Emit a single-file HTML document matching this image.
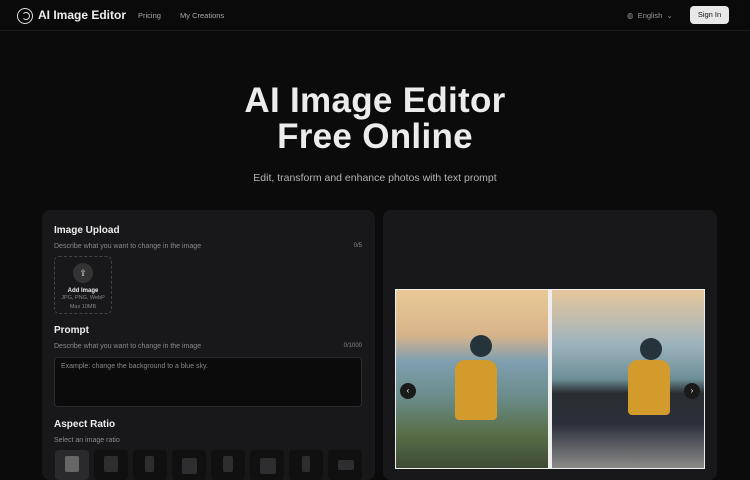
<!DOCTYPE html>
<html><head><meta charset="utf-8"><style>
*{box-sizing:border-box;margin:0;padding:0}
body{width:750px;height:468px;overflow:hidden;background:#0b0b0c;font-family:"Liberation Sans",sans-serif;color:#fff;position:relative}
.hdr{position:absolute;left:0;top:0;width:750px;height:31px;border-bottom:1px solid #1c1c1e;background:#0a0a0b}
.logo{position:absolute;left:17px;top:8px;width:16px;height:16px;border:1.5px solid #ddd;border-radius:50%}
.logo:after{content:"";position:absolute;left:4px;top:3px;width:6px;height:6px;border:1px solid #ddd;border-radius:50%;border-left-color:transparent}
.brand{position:absolute;left:38px;top:8px;font-size:12px;font-weight:bold;color:#eee}
.nav{position:absolute;top:11px;font-size:7.5px;color:#aaa}
.lang{position:absolute;left:627px;top:11px;font-size:7.5px;color:#999}
.sign{position:absolute;left:690px;top:6px;width:39px;height:18px;background:#e8e8e8;border-radius:4px;color:#111;font-size:7.5px;text-align:center;line-height:18px}
h1{position:absolute;left:0;width:750px;text-align:center;font-size:35px;font-weight:bold;color:#ececec;line-height:36px;top:83px;letter-spacing:0.3px}
.sub{position:absolute;top:172px;width:750px;text-align:center;font-size:10.5px;color:#b5b5b5}
.card{position:absolute;top:210px;height:270px;background:#18181a;border-radius:8px}
.lbl{position:absolute;left:54px;font-size:10px;font-weight:bold;color:#eee}
.hint{position:absolute;left:54px;font-size:7px;color:#8a8a8a}
.cnt{position:absolute;right:388px;font-size:6px;color:#8a8a8a}
.up{position:absolute;left:54px;top:256px;width:58px;height:58px;border:1px dashed #444;border-radius:5px;text-align:center}
.ta{position:absolute;left:54px;top:357px;width:308px;height:50px;background:#0b0b0c;border:1px solid #2a2a2c;border-radius:4px;font-size:7px;color:#888;padding:5px 6px}
.ar{position:absolute;top:450px;width:34px;height:30px;background:#101011;border-radius:4px}
.ar i{position:absolute;left:10px;top:6px;width:14px;height:16px;background:#2e2e30;border-radius:2px}
.img{position:absolute;top:290px;height:178px}
</style></head><body>
<div class="hdr">
<div class="logo"></div><div class="brand">AI Image Editor</div>
<div class="nav" style="left:138px">Pricing</div><div class="nav" style="left:180px">My Creations</div>
<div class="lang">◍&nbsp; English &nbsp;⌄</div>
<div class="sign">Sign In</div>
</div>
<h1>AI Image Editor<br>Free Online</h1>
<div class="sub">Edit, transform and enhance photos with text prompt</div>
<div class="card" style="left:42px;width:333px"></div>
<div class="card" style="left:383px;width:334px"></div>
<div class="lbl" style="top:225px">Image Upload</div>
<div class="hint" style="top:243px">Describe what you want to change in the image</div>
<div class="cnt" style="top:243px">0/5</div>
<div class="up">
<div style="margin:6px auto 0;width:20px;height:20px;border-radius:50%;background:#333;color:#ddd;font-size:9px;line-height:20px">⇪</div>
<div style="font-size:6px;font-weight:bold;color:#eee;margin-top:5px">Add Image</div>
<div style="font-size:5.5px;color:#888;margin-top:1px">JPG, PNG, WebP</div>
<div style="font-size:5.5px;color:#888;margin-top:3px">Max 10MB</div>
</div>
<div class="lbl" style="top:325px">Prompt</div>
<div class="hint" style="top:343px">Describe what you want to change in the image</div>
<div class="cnt" style="top:343px">0/1000</div>
<div class="ta">Example: change the background to a blue sky.</div>
<div class="lbl" style="top:419px">Aspect Ratio</div>
<div class="hint" style="top:437px">Select an image ratio</div>
<div class="ar" style="left:55px;background:#2a2a2c"><i style="background:#666"></i></div>
<div class="ar" style="left:94px"><i></i></div>
<div class="ar" style="left:133px"><i style="left:12px;width:9px"></i></div>
<div class="ar" style="left:172px"><i style="width:15px;top:8px"></i></div>
<div class="ar" style="left:211px"><i style="left:12px;width:10px"></i></div>
<div class="ar" style="left:250px"><i style="width:16px;top:8px"></i></div>
<div class="ar" style="left:289px"><i style="left:13px;width:8px"></i></div>
<div class="ar" style="left:328px"><i style="width:16px;top:10px;height:10px"></i></div>
<div style="position:absolute;left:395px;top:289px;width:310px;height:180px;background:#eee"></div>
<div class="img" style="left:396px;width:152px;background:linear-gradient(180deg,#e9c996 0%,#d8b48a 25%,#7f9fb0 40%,#6b8c8a 60%,#59704a 80%,#3e4a35 100%)"></div>
<div class="img" style="left:552px;width:152px;background:linear-gradient(180deg,#e6c79b 0%,#9eb3bd 30%,#6e8f98 50%,#2a2d30 58%,#2b2f3a 75%,#8a8a88 100%)"></div>
<div style="position:absolute;left:455px;top:360px;width:42px;height:60px;background:#d39b2c;border-radius:10px 10px 4px 4px"></div>
<div style="position:absolute;left:470px;top:335px;width:22px;height:22px;background:#25333a;border-radius:50%"></div>
<div style="position:absolute;left:628px;top:360px;width:42px;height:55px;background:#d39b2c;border-radius:10px 10px 4px 4px"></div>
<div style="position:absolute;left:640px;top:338px;width:22px;height:22px;background:#25333a;border-radius:50%"></div>
<div style="position:absolute;left:400px;top:383px;width:16px;height:16px;border-radius:50%;background:#1a1a1a;color:#fff;font-size:8px;text-align:center;line-height:16px">‹</div>
<div style="position:absolute;left:684px;top:383px;width:16px;height:16px;border-radius:50%;background:#1a1a1a;color:#fff;font-size:8px;text-align:center;line-height:16px">›</div>
</body></html>
